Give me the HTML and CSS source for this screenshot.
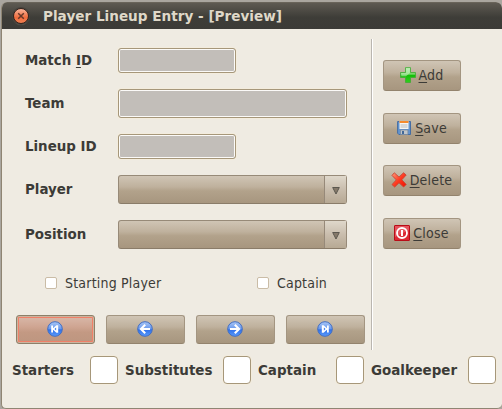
FILE: index.html
```html
<!DOCTYPE html>
<html lang="en">
<head>
<meta charset="utf-8">
<title>Player Lineup Entry</title>
<link rel="stylesheet" href="styles.css">
</head>
<body>
<svg class="defs" width="0" height="0">
  <defs>
    <linearGradient id="blue" x1="0" y1="0" x2="0" y2="1"><stop offset="0" stop-color="#a9c6f5"/><stop offset=".5" stop-color="#6798ee"/><stop offset=".55" stop-color="#2f70ea"/><stop offset="1" stop-color="#5b9bfa"/></linearGradient>
    <linearGradient id="green" x1="0" y1="0" x2="0" y2="1"><stop offset="0" stop-color="#bdeeb4"/><stop offset=".45" stop-color="#70d55f"/><stop offset=".5" stop-color="#12bd06"/><stop offset="1" stop-color="#2fcf1c"/></linearGradient>
    <linearGradient id="red" x1="0" y1="0" x2="1" y2="1"><stop offset="0" stop-color="#ff9a7c"/><stop offset=".5" stop-color="#ff3a20"/><stop offset="1" stop-color="#f01000"/></linearGradient>
    <symbol id="disc" viewBox="0 0 16 16"><circle cx="8" cy="8" r="7.3" fill="url(#blue)" stroke="#426ec2"/></symbol>
  </defs>
</svg>
<div class="window">
  <header class="titlebar">
    <span class="close-dot"><svg width="8" height="8" viewBox="0 0 8 8"><path d="M1.2 1.2 6.8 6.8M6.8 1.2 1.2 6.8" stroke="#66382a" stroke-width="1.5"/></svg></span>
    <span class="title">Player Lineup Entry - [Preview]</span>
  </header>
  <main class="content">
    <section class="form">
      <div class="fields">
        <label>Match <u>I</u>D</label><div class="input short"></div>
        <label>Team</label><div class="input"></div>
        <label>Lineup ID</label><div class="input short"></div>
        <label>Player</label><div class="combo"><span class="arrow"><svg width="8" height="8" viewBox="0 0 8 8"><path d="M.7.5h6.6L4 7z" fill="#85796a" stroke="#5c584f"/></svg></span></div>
        <label>Position</label><div class="combo"><span class="arrow"><svg width="8" height="8" viewBox="0 0 8 8"><path d="M.7.5h6.6L4 7z" fill="#85796a" stroke="#5c584f"/></svg></span></div>
      </div>
      <div class="checks">
        <label class="check"><i></i>Starting Player</label>
        <label class="check"><i></i>Captain</label>
      </div>
      <nav class="nav">
        <button class="btn focused"><svg width="16" height="16" viewBox="0 0 16 16"><use href="#disc"/><path d="M4.2 4.5H6V7.3L9.4 4.3H11.2V11.7H9.4L6 8.7V11.5H4.2z" fill="#fff"/><path d="M9.1 6.5v3L7.5 8z" fill="#387aed"/></svg></button>
        <button class="btn"><svg width="16" height="16" viewBox="0 0 16 16"><use href="#disc"/><path d="M13 8H4.4M8.2 3.7 3.9 8l4.3 4.3" fill="none" stroke="#fff" stroke-width="2.1"/></svg></button>
        <button class="btn"><svg width="16" height="16" viewBox="0 0 16 16"><use href="#disc"/><path d="M3 8h8.6M7.8 3.7 12.1 8l-4.3 4.3" fill="none" stroke="#fff" stroke-width="2.1"/></svg></button>
        <button class="btn"><svg width="16" height="16" viewBox="0 0 16 16"><use href="#disc"/><path d="M11.8 4.5H10V7.3L6.6 4.3H4.8V11.7H6.6L10 8.7V11.5h1.8z" fill="#fff"/><path d="M6.9 6.5v3L8.5 8z" fill="#387aed"/></svg></button>
      </nav>
    </section>
    <aside class="actions">
      <button class="btn"><svg width="16" height="16" viewBox="0 0 16 16"><path d="M5.5 .6h5v4.9h5v5h-5v5h-5v-5h-5v-5h5z" fill="url(#green)" stroke="#40aa33" stroke-width=".8"/><path d="M6.1 1.2h3.8V6L6 9.2H1.2V6.1h4.9z" fill="#c9efc2" opacity=".55"/></svg><span><u>A</u>dd</span></button>
      <button class="btn"><svg width="16" height="16" viewBox="0 0 16 16"><path d="M1.6 1.5h12.9v13H2.9L1.6 13.2z" fill="#6394cf" stroke="#456da3"/><path d="M3.5 1h9v8h-9z" fill="#f5f5f4"/><path d="M3.5 1h9v2h-9z" fill="#f58a2d"/><path d="M4.5 5h7M4.5 7h7" stroke="#b9bbbc"/><path d="M4.5 10h7.4v4.5H4.5z" fill="#c2c6c9" stroke="#758599" stroke-width=".7"/><path d="M6 11h2v3H6z" fill="#416897"/></svg><span><u>S</u>ave</span></button>
      <button class="btn"><svg width="16" height="16" viewBox="0 0 16 16"><path d="M1 3.4 3.3.8 8 5.1 12.5.8 15.2 3 10.8 7.8 15.2 12.4 12.6 15 8 10.8 3.7 15 1 12.6 5.3 7.9z" fill="url(#red)" stroke="#c64736" stroke-width=".9" stroke-linejoin="round"/></svg><span><u>D</u>elete</span></button>
      <button class="btn"><svg width="16" height="16" viewBox="0 0 16 16"><rect x=".5" y=".5" width="15" height="15" rx=".5" fill="#dc2933" stroke="#b90d18"/><path d="M1 1h14v4L1 12z" fill="#ed7880" opacity=".55"/><circle cx="8" cy="8" r="5" fill="none" stroke="#fff" stroke-width="1.8"/><path d="M8 5v6" stroke="#fff" stroke-width="2"/></svg><span><u>C</u>lose</span></button>
    </aside>
  </main>
  <footer class="totals">
    <label>Starters</label><div class="count"></div>
    <label>Substitutes</label><div class="count"></div>
    <label>Captain</label><div class="count"></div>
    <label>Goalkeeper</label><div class="count"></div>
  </footer>
</div>
</body>
</html>
```

FILE: styles.css
```css
* { box-sizing: border-box; }
body {
  margin: 0;
  width: 502px;
  height: 409px;
  padding: 2px 0 0 1px;
  overflow: hidden;
  background: #aaa69f;
  font: 13.4px/16px "DejaVu Sans", sans-serif;
  color: #3c3b37;
}
.defs { position: absolute; }
svg { display: block; flex: none; }
u {
  text-decoration: underline;
  text-decoration-thickness: 1px;
  text-underline-offset: 2px;
  text-decoration-skip-ink: none;
}
.window {
  width: 501px;
  height: 407px;
  background: #efebe2;
  border: solid #8f8573;
  border-width: 0 0 1px 1px;
  border-radius: 6px 6px 5px 5px;
  overflow: hidden;
}
.titlebar {
  display: flex;
  align-items: center;
  height: 27px;
  padding: 0 0 0 11px;
  background: linear-gradient(#5e5a52, #3e3d38 55%, #3c3b37);
  border-top: 1px solid #69645a;
  color: #dfd8c8;
  font-weight: bold;
}
.close-dot {
  display: flex;
  align-items: center;
  justify-content: center;
  width: 16px;
  height: 16px;
  border: 1px solid #38251e;
  border-radius: 50%;
  background: linear-gradient(#f9b49a, #ef6c3d 60%, #f18052);
  box-shadow: 0 0 0 1px #45423d, 0 1px 1px #77736a;
}
.title { margin-left: 14px; padding-bottom: 1px; font-size: 13.6px; white-space: nowrap; }
.content { display: flex; height: 321px; padding-top: 10px; }
.form {
  width: 370px;
  padding: 9px 0 0 14px;
  border-right: 1px solid #bab6b0;
  box-shadow: 1px 0 0 #fff;
}
.fields {
  display: grid;
  grid-template-columns: 93px 229px;
  grid-template-rows: 25px 29px 25px 29px 29px;
  row-gap: 16px;
  padding-left: 9px;
  align-items: center;
  font-weight: bold;
}
.input {
  height: 100%;
  border: 1px solid #a6977a;
  border-radius: 3px;
  background: #c2beb9;
  box-shadow: inset 0 0 0 1px #fbfaf8, 0 0 0 1px #f3ecdd;
}
.short { width: 118px; }
.combo {
  display: flex;
  justify-content: flex-end;
  height: 100%;
  border: 1px solid #978a78;
  border-bottom-color: #8a7c69;
  border-radius: 3px;
  background: linear-gradient(#d0c5b5, #bfb19d 40%, #b2a28b 55%, #a7967f);
}
.arrow {
  display: flex;
  align-items: center;
  justify-content: center;
  width: 22px;
  padding: 3px 0 0 1px;
  border-left: 1px solid #968979;
  background: linear-gradient(#dfd8cb, #c9bdad 50%, #b7a994);
}
.checks { display: flex; height: 66px; padding: 26px 0 0 29px; }
.check {
  display: flex;
  align-items: center;
  height: 16px;
  width: 212px;
  font: 14px/16px "DejaVu Sans Condensed", "DejaVu Sans", sans-serif;
  letter-spacing: .2px;
  white-space: nowrap;
}
.check:last-child { width: auto; }
.check i {
  width: 12px;
  height: 12px;
  margin-right: 8px;
  border: 1px solid #cabca6;
  border-radius: 2px;
  background: #fff;
}
.nav { display: flex; gap: 11px; }
.btn {
  display: flex;
  align-items: center;
  justify-content: center;
  width: 79px;
  height: 29px;
  margin: 0;
  padding: 0;
  border: 1px solid #a39581;
  border-bottom-color: #93836d;
  border-radius: 3px;
  background: linear-gradient(#d0c5b5, #bfb19d 40%, #b2a28b 55%, #a7967f);
  color: inherit;
  font: 14px/16px "DejaVu Sans Condensed", "DejaVu Sans", sans-serif;
  letter-spacing: .2px;
}
.nav .btn { padding: 0 1px 1px 0; }
.focused {
  border-color: #8d8069;
  background: linear-gradient(#d9b9aa, #cfa592 40%, #c39983 60%, #bd9680);
  box-shadow: inset 0 0 0 1px #cbb5a0, inset 0 0 0 2px #f08068;
}
.actions {
  display: grid;
  grid-template-rows: 53px 52px 53px 31px;
  align-content: start;
  padding: 21px 0 0 11px;
}
.actions .btn { width: 78px; height: 31px; gap: 3px; padding: 0 1px 1px 0; }
.totals {
  display: grid;
  grid-template-columns: 78px 28px 105px 28px 85px 28px 104px 28px;
  align-items: center;
  padding: 6px 0 0 10px;
  font-size: 13.45px;
  font-weight: bold;
}
.totals label { padding-top: 2px; }
.totals label:not(:first-child) { padding-left: 7px; }
.count {
  height: 28px;
  border: 1px solid #a6977a;
  border-radius: 4px;
  background: #fff;
  box-shadow: 0 0 0 1px #f3ecdd;
}
```
